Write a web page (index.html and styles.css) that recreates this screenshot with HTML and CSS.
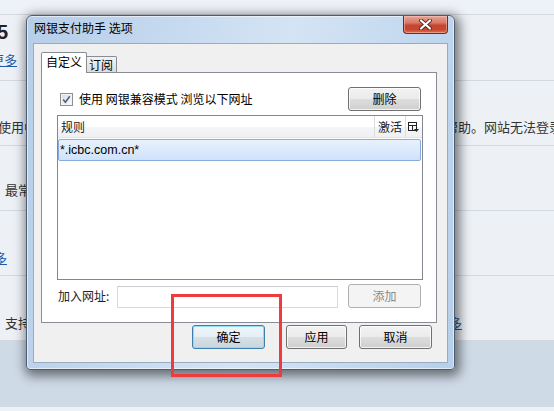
FILE: index.html
```html
<!DOCTYPE html>
<html lang="zh-CN">
<head>
<meta charset="utf-8">
<title>网银支付助手 选项</title>
<link rel="stylesheet" href="styles.css">
</head>
<body>
<div class="page">
  <div class="topbar"></div>
  <div class="row r1">
    <div class="cell stack">
      <div class="heading">5</div>
      <a class="link more-a">更多</a>
    </div>
    <div class="cell"></div>
  </div>
  <div class="row r2">
    <div class="cell"><span class="l-use">使用中</span></div>
    <div class="cell"><span class="r-help">帮助。网站无法登录</span></div>
  </div>
  <div class="row r3">
    <div class="cell"><span class="l-most">最常</span></div>
    <div class="cell"></div>
  </div>
  <div class="row r4">
    <div class="cell"><a class="link more-b">更多</a></div>
    <div class="cell"></div>
  </div>
  <div class="row r5">
    <div class="cell"><span class="l-sup">支持</span></div>
    <div class="cell"><a class="link more-c">更多</a></div>
  </div>
  <div class="band"></div>
  <div class="foot"></div>
</div>

<div class="window">
  <div class="titlebar">
    <span class="title">网银支付助手 选项</span>
    <div class="close">
      <svg width="13" height="11" viewBox="0 0 13 11">
        <path d="M2 1.5 L11 9.5 M11 1.5 L2 9.5" stroke="#5a2a20" stroke-width="4" stroke-linecap="round"/>
        <path d="M2 1.5 L11 9.5 M11 1.5 L2 9.5" stroke="#ffffff" stroke-width="2.2" stroke-linecap="round"/>
      </svg>
    </div>
  </div>
  <div class="client">
    <div class="tabs">
      <div class="tab active">自定义</div>
      <div class="tab">订阅</div>
    </div>
    <div class="panel">
      <div class="opt-row">
        <div class="check">
          <span class="box">
            <svg width="11" height="11" viewBox="0 0 11 11">
              <path d="M2.2 5.6 L4.4 8.2 L8.8 2.2" fill="none" stroke="#4b5f8e" stroke-width="1.6"/>
            </svg>
          </span>
          <span class="check-label">使用 网银兼容模式 浏览以下网址</span>
        </div>
        <button class="btn">删除</button>
      </div>
      <div class="list">
        <div class="list-head">
          <div class="col col-rule">规则</div>
          <div class="col col-act">激活</div>
          <div class="col col-menu">
            <svg width="11" height="10" viewBox="0 0 11 10">
              <rect x="0.5" y="0.5" width="8" height="8" fill="none" stroke="#222"/>
              <path d="M0.5 3.5 H8.5 M4.5 3.5 V8.5" stroke="#222"/>
              <path d="M6 7 H11 L8.5 10 Z" fill="#222"/>
            </svg>
          </div>
        </div>
        <div class="list-body">
          <div class="item selected">*.icbc.com.cn*</div>
        </div>
      </div>
      <div class="add-row">
        <span class="add-label">加入网址:</span>
        <div class="input"></div>
        <button class="btn disabled">添加</button>
      </div>
    </div>
    <div class="actions">
      <button class="btn default">确定</button>
      <button class="btn apply">应用</button>
      <button class="btn">取消</button>
    </div>
  </div>
</div>

<div class="highlight"></div>
</body>
</html>
```

FILE: styles.css
```css
html, body {
  margin: 0;
  padding: 0;
}

body {
  width: 554px;
  height: 411px;
  overflow: hidden;
  position: relative;
  background: #edf1f6;
  font-family: "Noto Sans CJK SC", "Liberation Sans", sans-serif;
  color: #222;
}

/* ---------- background page ---------- */
.page {
  display: flex;
  flex-direction: column;
}

.topbar {
  height: 15px;
  box-sizing: border-box;
  border-bottom: 1px solid #d3d9e1;
  background: #eef1f6;
}

.row {
  display: grid;
  grid-template-columns: 445px 1fr;
  box-sizing: border-box;
  height: 65px;
  border-bottom: 1px solid #d3d9e1;
  background: #edf1f6;
  font-size: 13px;
  line-height: 18px;
  color: #333;
  align-items: start;
}

.r1 { height: 66px; padding-top: 5px; }
.r2 { padding-top: 37px; }
.r3 { padding-top: 35px; }
.r4 { padding-top: 38px; }
.r5 { padding-top: 38px; }

.cell {
  display: flex;
  white-space: nowrap;
}

.stack {
  flex-direction: column;
  align-items: flex-start;
}

.heading {
  font-family: "Liberation Sans", sans-serif;
  font-weight: bold;
  font-size: 20px;
  line-height: 24px;
  color: #222;
  margin-left: -3px;
}

.link {
  color: #1d5ba8;
  text-decoration: underline;
}

.more-a { margin-top: 7px; margin-left: -9px; }
.more-b { margin-left: -19px; }
.more-c { margin-left: -9px; }
.l-use { margin-left: -2px; }
.l-most { margin-left: 5px; }
.l-sup { margin-left: 5px; }
.r-help { margin-left: 0; }

.band {
  height: 66px;
  background: #cfdae7;
}

.foot {
  height: 5px;
  background: #eef1f5;
}

/* ---------- dialog window ---------- */
.window {
  position: absolute;
  left: 26px;
  top: 15px;
  width: 429px;
  height: 355px;
  box-sizing: border-box;
  border: 1px solid #4e5d70;
  border-radius: 6px 6px 4px 4px;
  padding: 0 6px 6px 6px;
  display: flex;
  flex-direction: column;
  background: linear-gradient(100deg, #b6cee9 0%, #c5d9ef 30%, #d5e4f4 55%, #c3d8ef 80%, #b6cfea 100%);
  box-shadow: inset 0 0 0 1px rgba(255, 255, 255, 0.55), 2px 3px 11px 3px rgba(0, 0, 0, 0.5);
}

.titlebar {
  height: 27px;
  display: flex;
  justify-content: space-between;
  align-items: flex-start;
}

.title {
  padding-top: 4px;
  padding-left: 1px;
  font-size: 12px;
  line-height: 16px;
  color: #000;
}

.close {
  width: 45px;
  height: 18px;
  box-sizing: border-box;
  border: 1px solid #6b2c22;
  border-top: none;
  border-radius: 0 0 4px 4px;
  background: linear-gradient(#e8a597 0%, #d77865 40%, #c6452f 55%, #c9472f 80%, #dc7152 100%);
  box-shadow: inset 0 0 0 1px rgba(255, 210, 200, 0.45);
  display: flex;
  align-items: center;
  justify-content: center;
}

.client {
  flex: 1;
  box-sizing: border-box;
  border: 1px solid #9aabc0;
  background: #f0f0f0;
  padding: 8px 15px 13px 7px;
  display: flex;
  flex-direction: column;
}

/* tabs */
.tabs {
  height: 20px;
  display: flex;
  align-items: flex-end;
}

.tab {
  box-sizing: border-box;
  border: 1px solid #898c95;
  border-bottom: none;
  font-size: 12px;
  line-height: 14px;
  color: #000;
  display: flex;
  justify-content: center;
}

.tab.active {
  width: 46px;
  height: 21px;
  margin-bottom: -1px;
  background: #ffffff;
  position: relative;
  z-index: 1;
  padding-top: 2px;
  border-radius: 2px 2px 0 0;
}

.tab:not(.active) {
  width: 31px;
  height: 16px;
  margin-left: -1px;
  background: linear-gradient(#f3f3f3, #dcdcdc);
  padding-top: 1px;
  border-left: none;
  border-radius: 0 2px 0 0;
}

.panel {
  box-sizing: border-box;
  width: 396px;
  height: 251px;
  border: 1px solid #898c95;
  background: #ffffff;
  padding: 14px 13px 14px 15px;
  display: flex;
  flex-direction: column;
}

.opt-row {
  height: 24px;
  display: flex;
  align-items: center;
  justify-content: space-between;
  padding: 0 2px 0 3px;
}

.check {
  display: flex;
  align-items: center;
}

.box {
  width: 13px;
  height: 13px;
  box-sizing: border-box;
  border: 1px solid #8e8f8f;
  background: linear-gradient(135deg, #dcdcdc, #fbfbfb);
  box-shadow: inset 0 0 0 1px #f4f4f4;
  display: flex;
  align-items: center;
  justify-content: center;
}

.check-label {
  margin-left: 6px;
  font-size: 12px;
  line-height: 16px;
  color: #000;
}

/* buttons */
.btn {
  box-sizing: border-box;
  width: 73px;
  height: 24px;
  padding: 0;
  border: 1px solid #707070;
  border-radius: 3px;
  background: linear-gradient(#f2f2f2 0%, #ebebeb 48%, #dddddd 52%, #cfcfcf 100%);
  box-shadow: inset 0 0 0 1px rgba(255, 255, 255, 0.75);
  font-family: "Noto Sans CJK SC", sans-serif;
  font-size: 12px;
  line-height: 16px;
  color: #000;
}

.btn.default {
  border-color: #3c7fb1;
  box-shadow: inset 0 0 0 1px #93dcf6;
  background: linear-gradient(#eef6fa 0%, #e6eff5 48%, #d6e0e7 52%, #cbd5dc 100%);
}

.btn.disabled {
  border-color: #adb2b5;
  background: #f4f4f4;
  box-shadow: none;
  color: #8a8a8a;
}

/* list */
.list {
  margin-top: 4px;
  height: 165px;
  box-sizing: border-box;
  border: 1px solid #828790;
  display: flex;
  flex-direction: column;
}

.list-head {
  height: 22px;
  display: flex;
  background: linear-gradient(#ffffff 0%, #ffffff 50%, #f4f5f7 51%, #f0f1f3 100%);
  border-bottom: 1px solid #e2e3e5;
  box-sizing: border-box;
}

.col {
  font-size: 12px;
  line-height: 21px;
  color: #222;
  box-sizing: border-box;
}

.col-rule {
  width: 317px;
  padding-left: 3px;
  border-right: 1px solid #dcdcde;
}

.col-act {
  width: 31px;
  padding-left: 3px;
  border-right: 1px solid #dcdcde;
}

.col-menu {
  flex: 1;
  display: flex;
  align-items: center;
  padding-left: 2px;
}

.list-body {
  flex: 1;
  padding-top: 1px;
}

.item {
  width: 363px;
  height: 22px;
  box-sizing: border-box;
  font-family: "Liberation Sans", sans-serif;
  font-size: 12.5px;
  line-height: 20px;
  padding-left: 1px;
  color: #000;
}

.item.selected {
  border: 1px solid #84acdd;
  border-radius: 2px;
  background: linear-gradient(#e8f1fd, #cfe2fb);
}

/* add row */
.add-row {
  margin-top: 4px;
  height: 24px;
  display: flex;
  align-items: center;
  padding: 0 2px 0 1px;
}

.add-label {
  width: 59px;
  font-size: 12px;
  line-height: 16px;
  color: #222;
}

.input {
  width: 222px;
  height: 22px;
  box-sizing: border-box;
  border: 1px solid #d6dadf;
  border-top-color: #c9cdd2;
  background: #ffffff;
  margin-top: 2px;
  margin-right: 10px;
}

/* dialog buttons */
.actions {
  margin-top: 2px;
  height: 24px;
  display: flex;
  justify-content: flex-end;
  gap: 12px;
}

.btn.apply {
  width: 61px;
  margin-left: 9px;
}

/* red annotation */
.highlight {
  position: absolute;
  left: 171px;
  top: 294px;
  width: 111px;
  height: 83px;
  box-sizing: border-box;
  border: 3px solid #ef3a3e;
}
```
